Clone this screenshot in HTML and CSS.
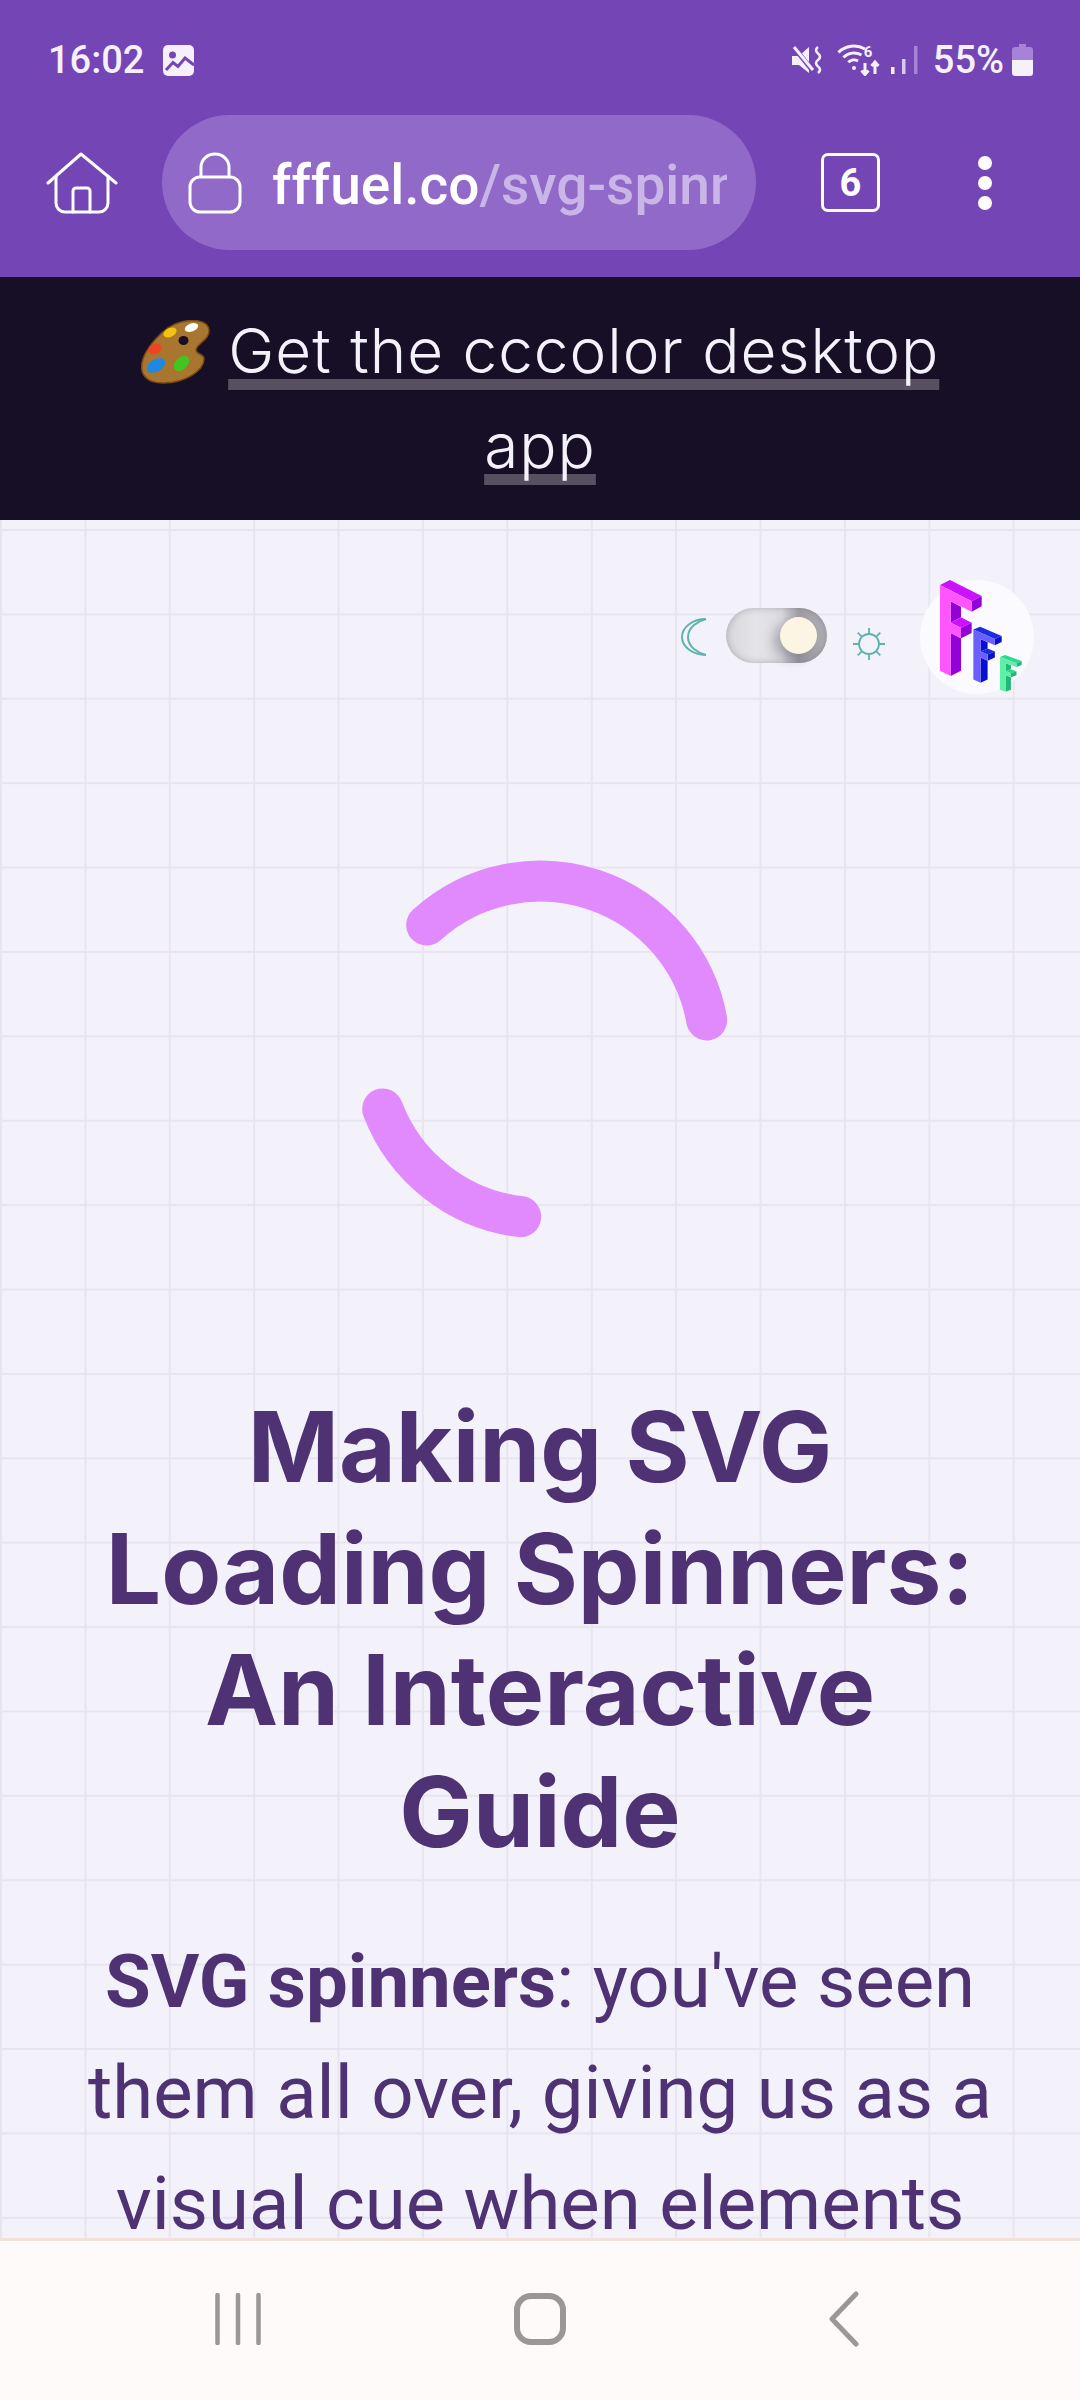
FILE: index.html
```html
<!DOCTYPE html>
<html lang="en">
<head>
  <meta charset="UTF-8">
  <meta name="viewport" content="width=device-width, initial-scale=1.0">
  <title>Making SVG Loading Spinners</title>
  <link rel="stylesheet" href="styles.css">
</head>
<body>

  <header class="browser">
    <div class="statusbar">
      <span class="clock">16:02</span>
      <svg class="icon-image" viewBox="0 0 31 31">
        <rect width="31" height="31" rx="5" fill="#f5f0fc"/>
        <circle cx="9.5" cy="10" r="3.5" fill="#7445b5"/>
        <path d="M3 25l7-7.5 5 4 7-8.5 9 7" fill="none" stroke="#7445b5" stroke-width="3"/>
      </svg>
      <div class="status-right">
        <svg class="icon-mute" viewBox="0 0 30 28">
          <path d="M0 10h7l10-9v26L7 19H0z" fill="#f5f0fc"/>
          <path d="M0 -1L21 25" stroke="#7445b5" stroke-width="5"/>
          <path d="M2 1L21 24" stroke="#f5f0fc" stroke-width="3"/>
          <path d="M26 1q-4 3 0 6.500q4 3 0 6.500q-4 3 0 6.500q4 3 0 6.500" fill="none" stroke="#f5f0fc" stroke-width="2.600"/>
        </svg>
        <svg class="icon-wifi" viewBox="0 0 44 32">
          <g fill="none" stroke="#f5f0fc" stroke-width="3">
            <path d="M1.400 8.400A22 22 0 0 1 28 5"/>
            <path d="M6.400 13.400A15 15 0 0 1 24.500 11"/>
            <path d="M11.300 18.300A8 8 0 0 1 21 17"/>
            <path d="M28 19v11M24.500 26.500l3.500 4 3.500-4"/>
            <path d="M38 30V18M34.500 22l3.500-4 3.500 4"/>
          </g>
          <circle cx="17" cy="24" r="2" fill="#f5f0fc"/>
          <text x="31" y="13" class="wifi-num">6</text>
        </svg>
        <svg class="icon-signal" viewBox="0 0 28 30">
          <rect x="0" y="22" width="3.500" height="7" fill="#f5f0fc"/>
          <rect x="11" y="14" width="3.500" height="15" fill="#d8c8ee"/>
          <rect x="23" y="1" width="3.500" height="28" fill="#a583d6"/>
        </svg>
        <span class="battery-text">55%</span>
        <svg class="icon-battery" viewBox="0 0 21 32">
          <path d="M7 0h7v3h4a3 3 0 0 1 3 3v10H0V6a3 3 0 0 1 3-3h4z" fill="#a583d6"/>
          <path d="M0 16h21v13a3 3 0 0 1-3 3H3a3 3 0 0 1-3-3z" fill="#f5f0fc"/>
        </svg>
      </div>
    </div>

    <div class="toolbar">
      <svg class="icon-home" viewBox="0 0 72 62">
        <g fill="none" stroke="#fff" stroke-width="3" stroke-linecap="round" stroke-linejoin="round">
          <path d="M2 31L35 2l35 29"/>
          <path d="M10 24v27a9 9 0 0 0 9 9h34a9 9 0 0 0 9-9V24"/>
          <path d="M27 60V39a3 3 0 0 1 3-3h11a3 3 0 0 1 3 3v21"/>
        </g>
      </svg>
      <div class="urlbar">
        <svg class="icon-lock" viewBox="0 0 56 62">
          <g fill="none" stroke="#fff" stroke-width="3">
            <rect x="3" y="25" width="50" height="35" rx="10"/>
            <path d="M14 25V15a14 13 0 0 1 28 0v10"/>
          </g>
        </svg>
        <div class="url"><b>fffuel.co</b>/svg-spinners</div>
      </div>
      <div class="tabs">6</div>
      <div class="menu">
        <span class="dot"></span>
        <span class="dot"></span>
        <span class="dot"></span>
      </div>
    </div>
  </header>

  <div class="banner">
    <svg class="palette" viewBox="0 0 69 64">
      <path d="M40 2C52-1 67 0 68 10 69 20 55 24 55 30 55 35 63 33 63 39 63 50 45 63 22 63 6 63-1 55 1 43 3 30 22 6 40 2Z" fill="#a9762f" stroke="#7a4a14" stroke-width="1.500"/>
      <ellipse cx="42.500" cy="20.500" rx="5" ry="4.500" fill="#170f26"/>
      <ellipse cx="50.500" cy="7.500" rx="7" ry="4" fill="#fff" transform="rotate(-20 50.500 7.500)"/>
      <ellipse cx="29" cy="12.500" rx="7" ry="4.500" fill="#f5c211" transform="rotate(-25 29 12.500)"/>
      <ellipse cx="14" cy="29" rx="7" ry="5" fill="#ee4422" transform="rotate(-25 14 29)"/>
      <ellipse cx="15" cy="45.500" rx="10" ry="6" fill="#1e88e5" transform="rotate(-30 15 45.500)"/>
      <ellipse cx="40.500" cy="43.500" rx="9" ry="6" fill="#44c422" transform="rotate(-45 40.500 43.500)"/>
    </svg>
    <a class="banner-link">Get the cccolor desktop app</a>
  </div>

  <main class="page">
    <div class="topbar">
      <svg class="icon-moon" viewBox="0 0 26 38">
        <g fill="none" stroke="#5fb3ac" stroke-width="2">
          <path d="M25 1C12 1 1 9 1 19s11 18 24 18"/>
          <path d="M25 1C17 3 7 9 7 19s10 16 18 18"/>
        </g>
      </svg>
      <div class="toggle"><span class="knob"></span></div>
      <svg class="icon-sun" viewBox="0 0 34 34">
        <g fill="none" stroke="#5fb3ac" stroke-width="1.800">
          <circle cx="17" cy="17" r="10"/>
          <path d="M17 1v6M17 27v6M1 17h6M27 17h6M5.700 5.700l4 4M24.300 24.300l4 4M5.700 28.300l4-4M24.300 9.700l4-4"/>
        </g>
      </svg>
      <svg class="logo" viewBox="60 60 342 342">
        <defs>
          <g id="fshape">
            <polygon class="f-top" points="120,75 150,60 245,108 215,124"/>
            <polygon class="f-dark" points="215,124 245,108 245,139 215,155"/>
            <polygon class="f-dark" points="152,124 183,140 183,172 152,188"/>
            <polygon class="f-top" points="152,188 183,172 215,188 183,203"/>
            <polygon class="f-dark" points="183,203 215,188 215,219 183,235"/>
            <polygon class="f-dark" points="152,219 183,235 183,332 152,348"/>
            <polygon class="f-light" points="120,75 215,124 215,155 152,124 152,188 183,203 183,235 152,219 152,348 120,332"/>
          </g>
        </defs>
        <circle cx="231" cy="231" r="171" fill="#fbfaff"/>
        <use href="#fshape" class="f-pink"/>
        <use href="#fshape" class="f-blue" transform="translate(220 200) scale(.68 .583) translate(-120 -60)"/>
        <use href="#fshape" class="f-green" transform="translate(300 285) scale(.52 .382) translate(-120 -60)"/>
      </svg>
    </div>

    <svg class="spinner" viewBox="0 0 420 420">
      <g fill="none" stroke="#e18afd" stroke-width="41" stroke-linecap="round">
        <path d="M96.700 85A169 169 0 0 1 376.700 180"/>
        <path d="M52.700 269A169 169 0 0 0 190.700 376.700"/>
      </g>
    </svg>

    <h1>Making SVG<br>Loading Spinners:<br>An Interactive<br>Guide</h1>
    <p class="intro"><strong>SVG spinners</strong>: you've seen them all over, giving us as a visual cue when elements</p>
  </main>

  <nav class="navbar">
    <svg class="nav-recent" viewBox="0 0 46 52">
      <path d="M2.500 2v48M23 2v48M43.500 2v48" fill="none" stroke="#999896" stroke-width="4.500" stroke-linecap="round"/>
    </svg>
    <div class="nav-home"></div>
    <svg class="nav-back" viewBox="0 0 30 56">
      <path d="M27 3L3 28l24 25" fill="none" stroke="#999896" stroke-width="5" stroke-linecap="round" stroke-linejoin="round"/>
    </svg>
  </nav>

</body>
</html>
```

FILE: styles.css
```css
* {
  box-sizing: border-box;
}
html, body {
  margin: 0;
  height: 2400px;
}
body {
  width: 1080px;
  display: flex;
  flex-direction: column;
  overflow: hidden;
  font-family: Roboto, sans-serif;
  background: #f3f1f9;
}
svg {
  display: block;
  flex: none;
}

/* browser chrome */
.browser {
  height: 277px;
  background: #7445b5;
  color: #f5f0fc;
  flex: none;
}
.statusbar {
  height: 115px;
  padding: 5px 47px 0 48px;
  display: flex;
  align-items: center;
}
.clock {
  font-size: 38px;
  font-weight: 500;
}
.icon-image {
  width: 31px;
  height: 31px;
  margin-left: 19px;
}
.status-right {
  margin-left: auto;
  display: flex;
  align-items: center;
}
.icon-mute {
  width: 30px;
  height: 28px;
}
.icon-wifi {
  width: 44px;
  height: 32px;
  margin-left: 15px;
}
.wifi-num {
  font: 700 15px Roboto, sans-serif;
  fill: #f5f0fc;
  text-anchor: middle;
}
.icon-signal {
  width: 28px;
  height: 30px;
  margin-left: 10px;
}
.battery-text {
  font-size: 38px;
  font-weight: 500;
  margin-left: 14px;
}
.icon-battery {
  width: 21px;
  height: 32px;
  margin-left: 8px;
}

.toolbar {
  height: 135px;
  padding-left: 46px;
  display: flex;
  align-items: center;
}
.icon-home {
  width: 72px;
  height: 62px;
}
.urlbar {
  width: 594px;
  height: 135px;
  margin-left: 44px;
  padding: 0 29px 0 25px;
  border-radius: 68px;
  background: #9169c8;
  display: flex;
  align-items: center;
  gap: 29px;
}
.icon-lock {
  width: 56px;
  height: 62px;
}
.url {
  flex: 1;
  margin-top: 4px;
  overflow: hidden;
  white-space: nowrap;
  font-size: 55px;
  font-weight: 500;
  color: #c9b6e6;
}
.url b {
  font-weight: 500;
  color: #fff;
}
.tabs {
  width: 59px;
  height: 59px;
  margin-left: 65px;
  border: 3.500px solid #fff;
  border-radius: 7px;
  color: #fff;
  font-size: 38px;
  font-weight: 700;
  display: flex;
  align-items: center;
  justify-content: center;
}
.menu {
  margin-left: 98px;
  display: flex;
  flex-direction: column;
  gap: 6px;
}
.dot {
  width: 14px;
  height: 14px;
  border-radius: 50%;
  background: #fff;
}

/* promo banner */
.banner {
  height: 243px;
  flex: none;
  padding: 26px 130px 0;
  background: #170f26;
  color: #f3f1f9;
  text-align: center;
  font-family: Inter, sans-serif;
  font-size: 62px;
  font-weight: 350;
  letter-spacing: 1px;
  line-height: 95px;
}
.palette {
  display: inline-block;
  width: 69px;
  height: 64px;
  vertical-align: -11px;
}
.banner-link {
  text-decoration: underline;
  text-decoration-color: #575060;
  text-decoration-thickness: 11px;
  text-decoration-skip-ink: none;
  text-underline-offset: 6px;
}

/* page */
.page {
  flex: 1;
  overflow: hidden;
  background-color: #f3f1f9;
  background-image:
    linear-gradient(to right, #e8e5f1 1.500px, transparent 1.500px),
    linear-gradient(to bottom, #e8e5f1 1.500px, transparent 1.500px);
  background-size: 84.400px 84.400px;
  background-position: 0 9px;
  color: #4e3274;
  text-align: center;
}
.topbar {
  padding: 60px 46px 0 0;
  display: flex;
  justify-content: flex-end;
  align-items: center;
}
.icon-moon {
  width: 26px;
  height: 38px;
}
.toggle {
  position: relative;
  width: 101px;
  height: 55px;
  margin: -3px 0 0 19px;
  border-radius: 28px;
  background: linear-gradient(to right, #d8d7dc, #e5e4e9 30%, #dcdbe0 55%, #a3a1a8 72%, #b2b0b7);
  box-shadow: inset 0 0 7px rgba(60, 55, 70, .3);
}
.knob {
  position: absolute;
  top: 9px;
  right: 10px;
  width: 37px;
  height: 37px;
  border-radius: 50%;
  background: #fdf5e3;
  box-shadow: -6px 5px 12px rgba(40, 35, 50, .3);
}
.icon-sun {
  width: 34px;
  height: 34px;
  margin: 14px 0 0 25px;
}
.logo {
  width: 114px;
  height: 114px;
  margin-left: 34px;
}
.f-top, .f-dark, .f-light {
  stroke-width: 0;
}
.f-top { fill: var(--top); }
.f-dark { fill: var(--dark); }
.f-light { fill: var(--light); }
.f-pink { --top: #cc11ff; --dark: #9400d8; --light: #ff55ff; }
.f-blue { --top: #1c2de0; --dark: #0a0fcf; --light: #6a60ff; }
.f-green { --top: #2dd98f; --dark: #1fb877; --light: #5ff0a8; }

.spinner {
  width: 420px;
  height: 420px;
  margin: 146px auto 0;
}
h1 {
  margin: 126px 0 0;
  font-family: Inter, sans-serif;
  font-size: 98px;
  font-weight: 700;
  line-height: 121.500px;
}
.intro {
  margin: 54px 70px 0;
  font-size: 74.300px;
  line-height: 111px;
}

/* android nav */
.navbar {
  height: 162px;
  flex: none;
  border-top: 3px solid #f3e1dc;
  background: #fefafa;
  position: relative;
  display: flex;
  align-items: flex-start;
  padding: 52px 0 0 215px;
}
.nav-recent {
  width: 46px;
  height: 52px;
}
.nav-home {
  width: 52px;
  height: 52px;
  margin-left: 253px;
  border: 6px solid #999896;
  border-radius: 17px;
}
.nav-back {
  width: 30px;
  height: 56px;
  margin: -2px 0 0 263px;
}
```
